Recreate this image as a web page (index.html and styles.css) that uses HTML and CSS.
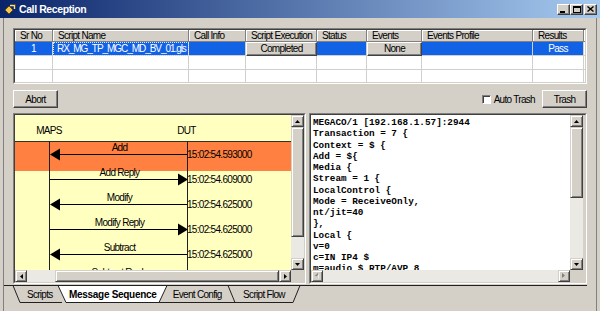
FILE: index.html
```html
<!DOCTYPE html>
<html>
<head>
<meta charset="utf-8">
<title>Call Reception</title>
<link rel="stylesheet" href="styles.css">
</head>
<body>
<div class="window">
  <div class="titlebar">
    <svg class="appicon" width="12" height="11" viewBox="0 0 12 11">
      <path d="M1 6 L5 2 L9 6 L5 10 Z" fill="#f4c84a" stroke="#6a4a10" stroke-width="1"/>
      <path d="M6 1.5 H10.5 V5" fill="none" stroke="#f4e090" stroke-width="1.4"/>
      <path d="M9 0.5 L11.5 0.5 L11.5 3" fill="none" stroke="#6a4a10" stroke-width="0.8"/>
    </svg>
    <span class="title">Call Reception</span>
    <div class="capbtns">
      <span class="capbtn"><span class="g-min"></span></span>
      <span class="capbtn"><span class="g-max"></span></span>
      <span class="capbtn close">
        <svg width="7" height="6" viewBox="0 0 7 6"><path d="M0.5 0.5 L6.5 5.5 M6.5 0.5 L0.5 5.5" stroke="#000" stroke-width="1.4"/></svg>
      </span>
    </div>
  </div>

  <div class="client">
    <div class="gridwrap">
      <div class="grid">
        <div class="h">Sr No</div><div class="h">Script Name</div><div class="h">Call Info</div><div class="h">Script Execution</div><div class="h">Status</div><div class="h">Events</div><div class="h">Events Profile</div><div class="h">Results</div><div class="h"></div>

        <div class="c sel ctr">1</div><div class="c sel focus name">RX_MG_TP_MGC_MD_BV_01.gls</div><div class="c sel"></div><div class="c cbtn">Completed</div><div class="c sel"></div><div class="c cbtn">None</div><div class="c sel"></div><div class="c sel ctr">Pass</div><div class="c"></div>

        <div class="c"></div><div class="c"></div><div class="c"></div><div class="c"></div><div class="c"></div><div class="c"></div><div class="c"></div><div class="c"></div><div class="c"></div>

        <div class="c"></div><div class="c"></div><div class="c"></div><div class="c"></div><div class="c"></div><div class="c"></div><div class="c"></div><div class="c"></div><div class="c"></div>
      </div>
    </div>

    <div class="toolbar">
      <button class="btn">Abort</button>
      <span class="spacer"></span>
      <label class="chk"><span class="box"></span>Auto Trash</label>
      <button class="btn">Trash</button>
    </div>

    <div class="panes">
      <div class="pane left">
        <div class="pane-in">
          <div class="canvas">
            <svg class="diagram" width="276" height="155" viewBox="0 0 276 155">
              <rect x="0" y="26" width="276" height="30" fill="#ff8040"/>
              <line x1="0" y1="26.5" x2="276" y2="26.5" stroke="#303030"/>
              <line x1="34.5" y1="26" x2="34.5" y2="155" stroke="#202020"/>
              <line x1="172.5" y1="26" x2="172.5" y2="155" stroke="#202020"/>
              <text x="34" y="18.5" text-anchor="middle">MAPS</text>
              <text x="171.5" y="18.5" text-anchor="middle">DUT</text>

              <line x1="40" y1="39.5" x2="172" y2="39.5" stroke="#000"/>
              <polygon points="35,39.5 45,33.5 45,45.5" fill="#000"/>
              <text x="104.5" y="36" text-anchor="middle">Add</text>
              <text x="172" y="43">15:02:54.593000</text>

              <line x1="35" y1="64.5" x2="167" y2="64.5" stroke="#000"/>
              <polygon points="173,64.5 163,58.5 163,70.5" fill="#000"/>
              <text x="104.5" y="61" text-anchor="middle">Add Reply</text>
              <text x="172" y="68">15:02:54.609000</text>

              <line x1="40" y1="89.5" x2="172" y2="89.5" stroke="#000"/>
              <polygon points="35,89.5 45,83.5 45,95.5" fill="#000"/>
              <text x="104.5" y="86" text-anchor="middle">Modify</text>
              <text x="172" y="93">15:02:54.625000</text>

              <line x1="35" y1="114.5" x2="167" y2="114.5" stroke="#000"/>
              <polygon points="173,114.5 163,108.5 163,120.5" fill="#000"/>
              <text x="104.5" y="111" text-anchor="middle">Modify Reply</text>
              <text x="172" y="118">15:02:54.625000</text>

              <line x1="40" y1="139.5" x2="172" y2="139.5" stroke="#000"/>
              <polygon points="35,139.5 45,133.5 45,145.5" fill="#000"/>
              <text x="104.5" y="136" text-anchor="middle">Subtract</text>
              <text x="172" y="143">15:02:54.625000</text>

              <text x="104.5" y="161" text-anchor="middle">Subtract Reply</text>
            </svg>
          </div>
          <div class="vscroll">
            <span class="arrow"><svg width="5" height="3" viewBox="0 0 5 3"><polygon points="0,3 2.5,0 5,3" fill="#000"/></svg></span>
            <span class="thumb lthumb"></span>
            <span class="track"></span>
            <span class="arrow"><svg width="5" height="3" viewBox="0 0 5 3"><polygon points="0,0 2.5,3 5,0" fill="#000"/></svg></span>
          </div>
          <div class="hscroll">
            <span class="arrow"><svg width="3" height="5" viewBox="0 0 3 5"><polygon points="3,0 0,2.5 3,5" fill="#000"/></svg></span>
            <span class="track ltrack"></span>
            <span class="thumb hthumb"></span>
            <span class="arrow"><svg width="3" height="5" viewBox="0 0 3 5"><polygon points="0,0 3,2.5 0,5" fill="#000"/></svg></span>
          </div>
          <div class="corner"></div>
        </div>
      </div>

      <div class="splitter"></div>

      <div class="pane right">
        <div class="pane-in">
          <div class="memo">MEGACO/1 [192.168.1.57]:2944
Transaction = 7 {
Context = $ {
Add = ${
Media {
Stream = 1 {
LocalControl {
Mode = ReceiveOnly,
nt/jit=40
},
Local {
v=0
c=IN IP4 $
m=audio $ RTP/AVP 8</div>
          <div class="vscroll">
            <span class="arrow"><svg width="5" height="3" viewBox="0 0 5 3"><polygon points="0,3 2.5,0 5,3" fill="#000"/></svg></span>
            <span class="thumb rthumb"></span>
            <span class="track"></span>
            <span class="arrow"><svg width="5" height="3" viewBox="0 0 5 3"><polygon points="0,0 2.5,3 5,0" fill="#000"/></svg></span>
          </div>
          <div class="hscroll">
            <span class="arrow"><svg width="4" height="6" viewBox="0 0 4 6"><polygon points="3,0 0,2.5 3,5" fill="#808080"/><polygon points="4,1 1,3.5 4,6" fill="#fff" opacity="0.6"/></svg></span>
            <span class="track"></span>
            <span class="arrow"><svg width="4" height="6" viewBox="0 0 4 6"><polygon points="0,0 3,2.5 0,5" fill="#808080"/></svg></span>
          </div>
          <div class="corner"></div>
        </div>
      </div>
    </div>

    <div class="tabs">
      <svg class="tabshape" width="583" height="18" viewBox="0 0 583 18">
        <line x1="0" y1="0.5" x2="583" y2="0.5" stroke="#202020"/>
        <path d="M9 0.5 L16 17.5 L58 17.5" fill="none" stroke="#202020"/>
        <path d="M155 17.5 L289 17.5 L296 0.5" fill="none" stroke="#202020"/>
        <path d="M224 0.5 L231 17.5" fill="none" stroke="#202020"/>
        <polygon points="54,1 62,17.5 155,17.5 163,1" fill="#ffffff"/>
        <path d="M54 0.5 L62 17.5 L155 17.5 L163 0.5" fill="none" stroke="#202020"/>
      </svg>
      <div class="tablabels">
        <span class="tab t1">Scripts</span>
        <span class="tab t2 active">Message Sequence</span>
        <span class="tab t3">Event Config</span>
        <span class="tab t4">Script Flow</span>
      </div>
    </div>
  </div>
</div>
</body>
</html>
```

FILE: styles.css
```css
* { box-sizing: border-box; }
html, body { margin: 0; padding: 0; }
body {
  width: 600px;
  height: 311px;
  overflow: hidden;
  background: #d4d0c8;
  font-family: "Liberation Sans", Arial, sans-serif;
  font-size: 10px;
  letter-spacing: -0.7px;
  color: #000;
}
.window { height: 311px; display: flex; flex-direction: column; }

/* title bar */
.titlebar {
  height: 18px;
  flex: none;
  display: flex;
  align-items: center;
  padding-left: 4px;
  background: linear-gradient(to right, #0a246a 0%, #a6caf0 100%);
  color: #fff;
}
.appicon { flex: none; }
.title { font-weight: bold; font-size: 10.5px; letter-spacing: -0.4px; margin-left: 3px; }
.capbtns { margin-left: auto; display: flex; padding-right: 3px; }
.capbtn {
  width: 13px; height: 11px;
  background: #d4d0c8;
  border: 1px solid;
  border-color: #fff #404040 #404040 #fff;
  box-shadow: inset -1px -1px #808080;
  display: flex; align-items: center; justify-content: center;
  position: relative;
}
.capbtn.close { margin-left: 1px; }
.g-min { width: 5px; height: 2px; background: #000; margin-top: 5px; margin-right: 2px; }
.g-max { width: 8px; height: 7px; border: 1px solid #000; border-top-width: 2px; }

/* client area */
.client {
  flex: 1;
  margin: 0 3px;
  border-left: 1px solid #808080;
  border-right: 1px solid #808080;
  padding: 10px 9px 0 9px;
  display: flex;
  flex-direction: column;
}

/* grid */
.gridwrap {
  height: 56px;
  flex: none;
  border: 1px solid;
  border-color: #808080 #fff #fff #808080;
}
.grid {
  height: 100%;
  border: 1px solid;
  border-color: #404040 #d4d0c8 #d4d0c8 #404040;
  background: #fff;
  overflow: hidden;
  display: grid;
  grid-template-columns: 38px 136px 57px 71px 50px 55px 111px 51px 1fr;
  grid-template-rows: 12px 14px 14px 14px;
}
.h {
  background: #d4d0c8;
  border-right: 1px solid #808080;
  border-bottom: 1px solid #808080;
  box-shadow: inset 1px 1px #fff;
  padding-left: 5px;
  line-height: 11px;
  white-space: nowrap;
  overflow: hidden;
}
.c {
  border-right: 1px solid #cfcfcf;
  border-bottom: 1px solid #cfcfcf;
  padding: 0 3px;
  line-height: 13px;
  white-space: nowrap;
  overflow: hidden;
}
.sel { background: #1262e6; color: #fff; }
.ctr { text-align: center; }
.focus { outline: 1px dotted #dfe8ff; outline-offset: -1px; }
.name { letter-spacing: -1.05px; padding-left: 4px; }
.cbtn {
  background: #d4d0c8;
  border: 1px solid;
  border-color: #fff #404040 #404040 #fff;
  box-shadow: inset -1px -1px #808080;
  text-align: center;
  line-height: 12px;
}

/* toolbar */
.toolbar {
  height: 18px;
  margin-top: 6px;
  flex: none;
  display: flex;
  align-items: center;
}
.spacer { flex: 1; }
.btn {
  width: 45px;
  height: 18px;
  padding: 0;
  font: inherit;
  letter-spacing: inherit;
  color: #000;
  background: #d4d0c8;
  border: 1px solid;
  border-color: #fff #404040 #404040 #fff;
  box-shadow: inset -1px -1px #808080;
}
.chk { display: flex; align-items: center; margin-right: 7px; margin-top: 1px; }
.box {
  width: 9px; height: 9px;
  background: #fff;
  border: 1px solid;
  border-color: #808080 #fff #fff #808080;
  box-shadow: inset 1px 1px #404040;
  margin-right: 3px;
}

/* panes */
.panes { height: 171px; margin-top: 5px; flex: none; display: flex; }
.pane {
  border: 1px solid;
  border-color: #808080 #fff #fff #808080;
}
.pane.left { width: 293px; flex: none; }
.pane.right { flex: 1; }
.splitter { width: 3px; flex: none; }
.pane-in {
  height: 100%;
  border: 1px solid;
  border-color: #404040 #d4d0c8 #d4d0c8 #404040;
  background: #d4d0c8;
  display: grid;
  grid-template-columns: 1fr 13px;
  grid-template-rows: 1fr 12px;
}
.pane.right .pane-in { padding-right: 2px; }
.canvas { background: #ffffc0; overflow: hidden; }
.diagram { display: block; font-family: "Liberation Sans", Arial, sans-serif; font-size: 10px; letter-spacing: -0.7px; fill: #000; }
.memo {
  background: #fff;
  overflow: hidden;
  white-space: pre;
  font-family: "Liberation Mono", "Courier New", monospace;
  font-weight: bold;
  font-size: 9.33px;
  letter-spacing: 0;
  line-height: 11.25px;
  padding: 2px 2px;
  color: #000;
}

/* scrollbars */
.vscroll { display: flex; flex-direction: column; background: #ebe9e4; }
.hscroll { display: flex; background: #ebe9e4; }
.corner { background: #d4d0c8; }
.arrow, .thumb {
  flex: none;
  background: #d4d0c8;
  border: 1px solid;
  border-color: #d4d0c8 #404040 #404040 #d4d0c8;
  box-shadow: inset 1px 1px #fff, inset -1px -1px #808080;
  display: flex; align-items: center; justify-content: center;
}
.vscroll .arrow { height: 12px; }
.hscroll .arrow { width: 12px; }
.track { flex: 1; }
.lthumb { height: 110px; }
.rthumb { height: 71px; }
.ltrack { flex: none; width: 28px; }
.hthumb { flex: 1; }

/* tabs */
.tabs {
  position: relative;
  height: 18px;
  width: 583px;
  margin-left: -9px;
  margin-top: 1px;
  flex: none;
}
.tabshape { position: absolute; left: 0; top: 0; }
.tablabels {
  position: relative;
  display: flex;
  height: 18px;
  padding-left: 13px;
  align-items: center;
}
.tab { text-align: center; white-space: nowrap; padding-top: 1px; }
.t1 { width: 45.5px; }
.t2 { width: 100.5px; }
.t3 { width: 68.5px; }
.t4 { width: 65px; }
.active { font-weight: bold; letter-spacing: -0.3px; }
```
